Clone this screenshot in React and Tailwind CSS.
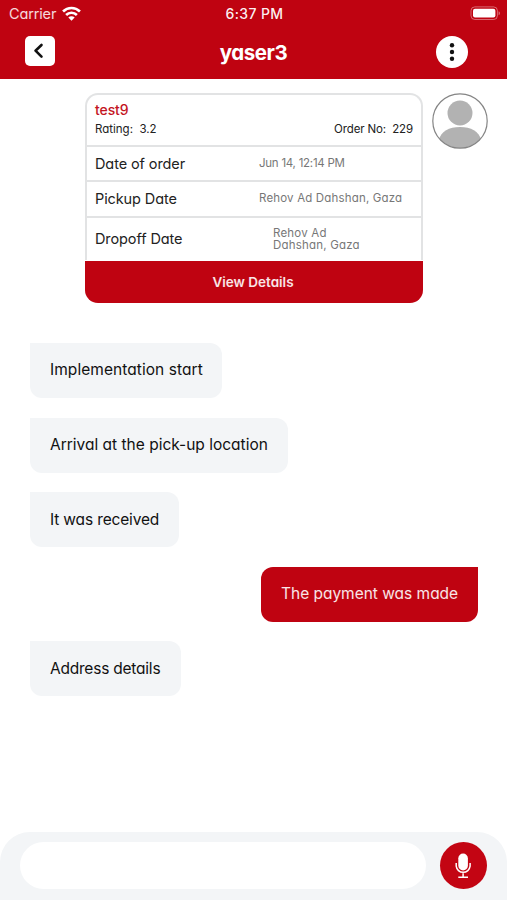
const messages = [
  { text: 'Implementation start', box: 'w-[192px]', type: 'tracking-[0.06px]' },
  { text: 'Arrival at the pick-up location', box: 'w-[258px]', type: 'tracking-[0px]' },
  { text: 'It was received', box: 'w-[149px]', type: 'tracking-[-0.15px]' },
  { text: 'The payment was made', box: 'w-[217px]', type: 'tracking-[-0.02px]', mine: true },
  { text: 'Address details', box: 'w-[151px]', type: 'tracking-[-0.22px]' },
];

function StatusBar() {
  return (
    <div className="flex h-7 items-center justify-between pl-[9px] pr-[5px] text-[14.5px] leading-7 text-white">
      <div className="flex w-[200px] items-center gap-[6px] text-white/85">
        <span className="tracking-[-0.15px]">Carrier</span>
        <svg width="19" height="15" viewBox="0 0 18 14" fill="none" stroke="#fff" strokeWidth="2.5" className="-translate-y-px">
          <path d="M1 5.1a11.4 11.4 0 0 1 16 0" />
          <path d="M3.9 8.4a7.2 7.2 0 0 1 10.2 0" />
          <path d="M9 13.8 6 10.8a4.2 4.2 0 0 1 6 0Z" fill="#fff" stroke="none" />
        </svg>
      </div>
      <span className="-translate-x-[1px] text-[14px] font-medium tracking-[0.35px] text-white/95">6:37 PM</span>
      <div className="flex w-[200px] justify-end">
        <svg width="31" height="15" viewBox="0 0 31 15" className="-translate-x-px -translate-y-px">
          <rect x="1" y="0.9" width="26.4" height="12.6" rx="3.8" fill="none" stroke="#fff" strokeOpacity=".4" />
          <rect x="3" y="2.8" width="22.4" height="8.8" rx="2" fill="#fff" />
          <path d="M28.6 5.2c1.8.7 1.8 3.4 0 4.1z" fill="#fff" fillOpacity=".45" />
        </svg>
      </div>
    </div>
  );
}

function Header() {
  return (
    <header className="h-[79px] bg-[#bf0311]">
      <StatusBar />
      <div className="flex h-12 items-center justify-between pl-[25px] pr-[39px]">
        <button className="flex h-[30px] w-[30px] -translate-y-px items-center justify-center rounded-[5px] bg-white">
          <svg width="30" height="30" viewBox="0 0 30 30" fill="none" stroke="#111" strokeWidth="2.6" strokeLinecap="round" strokeLinejoin="round">
            <path d="M16.500 9 10.500 14.700l6 6" />
          </svg>
        </button>
        <h1 className="pl-4 pt-0.5 text-[20.5px] font-bold leading-none tracking-[-0.45px] text-white">yaser3</h1>
        <button className="flex h-8 w-8 items-center justify-center rounded-full bg-white">
          <svg width="32" height="32" viewBox="0 0 32 32" fill="#111">
            <circle cx="16" cy="9.3" r="2.2" />
            <circle cx="16" cy="16" r="2.2" />
            <circle cx="16" cy="22.7" r="2.2" />
          </svg>
        </button>
      </div>
    </header>
  );
}

function OrderCard() {
  return (
    <section className="flex h-[210px] w-[338px] flex-col">
      <div className="flex h-[167px] flex-col rounded-t-[13px] border-x-2 border-t-2 border-[#e2e3e4] bg-white">
        <div className="h-[50px] px-2 pt-[6px] text-[#222]">
          <div className="text-[14px] font-medium leading-[18px] tracking-[-0.1px] text-[#c31422]"><span>test9</span></div>
          <div className="flex justify-between text-[11.5px] leading-[20px]">
            <span>Rating:&nbsp; 3.2</span>
            <span className="tracking-[-0.13px]">Order No:&nbsp; 229</span>
          </div>
        </div>
        <div className="flex h-[35px] items-center border-t-2 border-[#e2e3e4] px-2">
          <span className="w-[164px] text-[14.5px] tracking-[-0.1px] text-[#222]">Date of order</span>
          <span className="text-[11.5px] tracking-[-0.25px] text-[#777]">Jun 14, 12:14 PM</span>
        </div>
        <div className="flex h-[36px] items-center border-t-2 border-[#e2e3e4] px-2 pb-px">
          <span className="w-[164px] text-[14.5px] tracking-[-0.1px] text-[#222]">Pickup Date</span>
          <span className="text-[11.5px] tracking-[0.17px] text-[#777]">Rehov Ad Dahshan, Gaza</span>
        </div>
        <div className="flex h-[44px] items-center border-t-2 border-[#e2e3e4] px-2">
          <span className="w-[178px] text-[14.5px] tracking-[-0.1px] text-[#222]">Dropoff Date</span>
          <span className="text-[11.5px] leading-[12px] tracking-[0.2px] text-[#777]">Rehov Ad<br />Dahshan, Gaza</span>
        </div>
      </div>
      <button className="mt-px flex h-[42px] shrink-0 items-center justify-center rounded-b-[13px] bg-[#bf0311] text-[13.5px] font-semibold text-white/90"><span className="-translate-x-px">View Details</span></button>
    </section>
  );
}

function Avatar() {
  return (
    <svg width="56" height="56" viewBox="0 0 56 56">
      <clipPath id="avatar"><circle cx="28" cy="28" r="27" /></clipPath>
      <g clipPath="url(#avatar)" fill="#b2b2b2">
        <circle cx="28" cy="20" r="12.5" />
        <path d="M7 46.500c2-8 10-12.500 21-12.500S47 38.500 49 46.500v9H7z" />
      </g>
      <circle cx="28" cy="28" r="27.200" fill="none" stroke="#858585" strokeWidth="1.200" />
    </svg>
  );
}

function Composer() {
  return (
    <footer className="flex h-[68px] items-start rounded-t-[30px] bg-[#f3f5f7] pl-5 pt-[10px]">
      <div className="h-[47px] w-[406px] rounded-full bg-white" />
      <button className="ml-[14px] h-[47px] w-[47px] rounded-full bg-[#c30513]">
        <svg width="47" height="47" viewBox="0 0 47 47" fill="none" stroke="#fff" strokeWidth="1.500">
          <rect x="18.300" y="11.500" width="9.600" height="17" rx="4.800" fill="#fff" stroke="none" />
          <path d="M16.200 21v3.200a7 7 0 0 0 13.900 0V21M23.100 31.300v4M18.300 35.200h9.700" />
        </svg>
      </button>
    </footer>
  );
}

export default function App() {
  return (
    <div className="flex h-[900px] w-[507px] flex-col overflow-hidden bg-white font-['Inter','Liberation_Sans',sans-serif] [font-feature-settings:'cv11']">
      <Header />
      <main className="flex flex-1 flex-col">
        <div className="flex gap-[9px] pl-[85px] pt-[14px]">
          <OrderCard />
          <Avatar />
        </div>
        <div className="flex flex-col gap-[19.600px] pl-[30px] pr-[29px] pt-[40px]">
          {messages.map((m) => (
            <div
              key={m.text}
              className={`flex h-[55px] items-center whitespace-nowrap rounded-[12px] pb-px pl-5 text-[15.500px] ${m.box} ${m.mine ? 'self-end rounded-tr-none bg-[#bf0311] text-white/90' : 'rounded-tl-none bg-[#f3f5f7] text-[#111]'}`}
            >
              <span className={m.type}>{m.text}</span>
            </div>
          ))}
        </div>
      </main>
      <Composer />
    </div>
  );
}
